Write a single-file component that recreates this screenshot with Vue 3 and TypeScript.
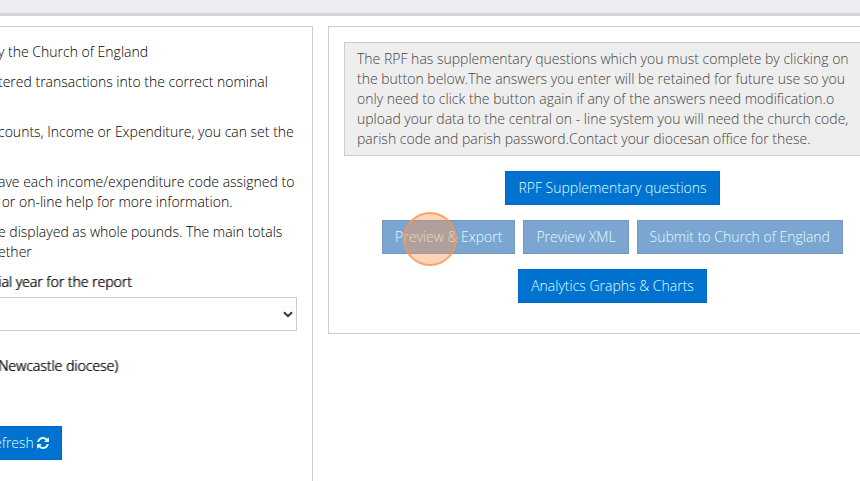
<script setup lang="ts">
import { ref } from 'vue'

interface Action {
  label: string
  disabled: boolean
  highlighted?: boolean
}

const year = ref('')

const intro: string[][] = [
  ['y the Church of England'],
  ['tered transactions into the correct nominal', ''],
  ['counts, Income or Expenditure, you can set the', ''],
  ['ave each income/expenditure code assigned to', '\u00a0or on-line help for more information.'],
  ['e displayed as whole pounds. The main totals', 'ether'],
]

const actionRows: Action[][] = [
  [{ label: 'RPF Supplementary questions', disabled: false }],
  [
    { label: 'Preview & Export', disabled: true, highlighted: true },
    { label: 'Preview XML', disabled: true },
    { label: 'Submit to Church of England', disabled: true },
  ],
  [{ label: 'Analytics Graphs & Charts', disabled: false }],
]
</script>

<template>
  <div class="viewport">
    <header class="topbar"></header>
    <main class="columns">
      <section class="panel settings">
        <p v-for="(lines, i) in intro" :key="i" class="para">
          <span v-for="(line, j) in lines" :key="j" class="line">{{ line }}</span>
        </p>
        <label class="strong" for="year">ial year for the report</label>
        <div class="select-wrap">
          <select id="year" v-model="year" class="select">
            <option value=""></option>
          </select>
          <svg class="chevron" viewBox="0 0 10 7" aria-hidden="true">
            <path d="M1 1.2 L5 5.2 L9 1.2" />
          </svg>
        </div>
        <p class="strong diocese">Newcastle diocese)</p>
        <button type="button" class="btn refresh">
          efresh
          <svg class="sync" viewBox="0 0 1536 1536" aria-hidden="true">
            <path
              d="M1511 928q0 5-1 7-64 268-268 434.500T764 1536q-146 0-282.500-55T238 1324l-129 129q-19 19-45 19t-45-19-19-45V960q0-26 19-45t45-19h448q26 0 45 19t19 45-19 45l-137 137q71 66 161 102t187 36q134 0 250-65t186-179q11-17 53-117 8-23 30-23h192q13 0 22.500 9.500t9.500 22.500zm25-800v448q0 26-19 45t-45 19h-448q-26 0-45-19t-19-45 19-45l138-138Q969 256 768 256q-134 0-250 65T332 500q-11 17-53 117-8 23-30 23H50q-13 0-22.500-9.500T18 608v-7q65-268 270-434.500T768 0q146 0 284 55.500T1297 212l130-129q19-19 45-19t45 19 19 45z"
            />
          </svg>
        </button>
      </section>

      <section class="panel export">
        <p class="notice">
          The RPF has supplementary questions which you must complete by clicking on the button
          below.The answers you enter will be retained for future use so you only need to click the
          button again if any of the answers need modification.o upload your data to the central on
          - line system you will need the church code, parish code and parish password.Contact your
          diocesan office for these.
        </p>
        <div v-for="(row, i) in actionRows" :key="i" class="actions">
          <div v-for="action in row" :key="action.label" class="action">
            <button type="button" class="btn" :disabled="action.disabled">{{ action.label }}</button>
            <span v-if="action.highlighted" class="pointer"></span>
          </div>
        </div>
      </section>
    </main>
  </div>
</template>

<style>
body {
  background: #fff;
}
</style>

<style scoped>
.viewport {
  height: 100vh;
  overflow: hidden;
  display: flex;
  flex-direction: column;
  font-family: 'Open Sans', 'Noto Sans', sans-serif;
  font-size: 14px;
  font-weight: 300;
  line-height: 20px;
  color: #000;
}
.topbar {
  flex: none;
  height: 13px;
  background: #eeecee;
  border-bottom: 3px solid #d1d5dd;
}
.columns {
  flex: 1;
  display: grid;
  grid-template-columns: 313fr 569fr;
  align-items: start;
  column-gap: 15px;
  margin-right: -37px;
  padding-top: 10px;
}
.panel {
  box-sizing: border-box;
  min-width: 0;
  padding: 15px;
  border: 1px solid #ccc;
}
.settings {
  align-self: stretch;
  border-left: 0;
  border-bottom: 0;
  padding-left: 0;
}
.para {
  margin: 0 0 10px -2px;
}
.line {
  display: block;
  min-height: 20px;
  white-space: nowrap;
}
.strong {
  display: block;
  margin: 0 0 5px -2px;
  text-shadow: 1px 0 0 rgba(0, 0, 0, 0.7);
}
.select-wrap {
  position: relative;
}
.select {
  display: block;
  box-sizing: border-box;
  width: 100%;
  height: 34px;
  border: 1px solid #ccc;
  border-left: 0;
  border-radius: 0;
  background: #fff;
  appearance: none;
  font: inherit;
}
.chevron {
  position: absolute;
  right: 4px;
  top: 14px;
  width: 10px;
  height: 7px;
  fill: none;
  stroke: #333;
  stroke-width: 2;
}
.diocese {
  margin: 25px 0 50px -2px;
}
.btn {
  display: block;
  margin: 0;
  padding: 6px 12px;
  border: 1px solid #0069c4;
  border-radius: 0;
  background: #0072cf;
  color: #e0ffff;
  font: inherit;
  white-space: nowrap;
}
.btn:disabled {
  background: #7ba6d1;
  border-color: #7598be;
}
.refresh {
  margin-left: -6px;
  padding-left: 0;
  border-left: 0;
}
.sync {
  width: 12px;
  height: 12px;
  vertical-align: -1px;
  fill: currentColor;
}
.notice {
  margin: 0 0 15px;
  padding: 6px 12px;
  border: 1px solid #ccc;
  background: #eee;
  color: #444;
}
.actions {
  display: flex;
  justify-content: center;
  gap: 8px;
  margin-bottom: 15px;
}
.action {
  position: relative;
}
.pointer {
  position: absolute;
  left: 21px;
  top: -8px;
  box-sizing: border-box;
  width: 54px;
  height: 54px;
  border: 2px solid rgba(247, 150, 80, 0.75);
  border-radius: 50%;
  background: rgba(255, 150, 80, 0.4);
  pointer-events: none;
}
</style>
